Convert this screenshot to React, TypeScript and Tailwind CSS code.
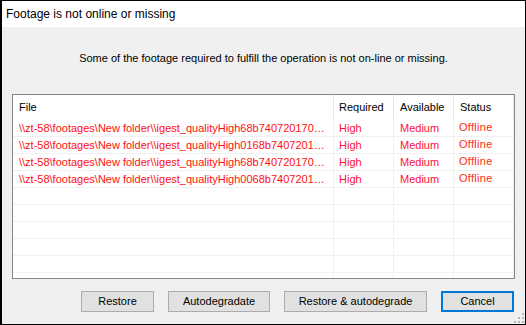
import React from "react";

const rows = [
  "\\\\zt-58\\footages\\New folder\\\\igest_qualityHigh68b740720170…",
  "\\\\zt-58\\footages\\New folder\\\\igest_qualityHigh0168b7407201…",
  "\\\\zt-58\\footages\\New folder\\\\igest_qualityHigh68b740720170…",
  "\\\\zt-58\\footages\\New folder\\\\igest_qualityHigh0068b7407201…",
];

function Row({ path }: { path?: string }) {
  return (
    <div className="grid grid-cols-[321px_60px_60px_60px] h-[17px] shrink-0 border-b border-[#f0f0f0] text-[11px] leading-[16px]">
      <div className="border-r border-[#f0f0f0] pl-[6px] text-[#ff1010] whitespace-nowrap overflow-hidden">{path}</div>
      <div className="border-r border-[#f0f0f0] pl-[5px] text-[#ff0f3c]">{path ? "High" : ""}</div>
      <div className="border-r border-[#f0f0f0] pl-[6px] text-[#ff0f3c]">{path ? "Medium" : ""}</div>
      <div className="border-r border-[#f0f0f0] pl-[5px] text-[#ff2a10] tracking-[0.3px] -mt-[1px]">{path ? "Offline" : ""}</div>
    </div>
  );
}

export default function App() {
  return (
    <div
      className="relative w-[526px] h-[325px] bg-[#f0f0f0] border-l-2 border-t border-r border-b border-black flex flex-col text-black overflow-hidden"
      style={{ fontFamily: '"Liberation Sans", Arial, sans-serif' }}
    >
      <div className="h-[26px] shrink-0 bg-white pl-[4px] flex items-center text-[12px]">
        Footage is not online or missing
      </div>
      <div className="h-[67px] shrink-0 flex justify-center pt-[24px] text-[11px] leading-[14px]">
        Some of the footage required to fulfill the operation is not on-line or missing.
      </div>
      <div className="ml-[10px] w-[503px] h-[185px] shrink-0 border border-[#828790] bg-white flex flex-col overflow-hidden">
        <div className="grid grid-cols-[321px_60px_60px_60px] h-[25px] shrink-0 text-[11px] items-center">
          <div className="h-full border-r border-[#e5e5e5] pl-[6px] flex items-center">File</div>
          <div className="h-full border-r border-[#e5e5e5] pl-[5px] flex items-center">Required</div>
          <div className="h-full border-r border-[#e5e5e5] pl-[6px] flex items-center">Available</div>
          <div className="h-full border-r border-[#e5e5e5] pl-[6px] flex items-center">Status</div>
        </div>
        {rows.map((r, i) => (
          <Row key={i} path={r} />
        ))}
        {[0, 1, 2, 3, 4, 5].map((i) => (
          <Row key={"e" + i} />
        ))}
      </div>
      <div className="mt-[12px] h-[21px] shrink-0 flex justify-end gap-[14px] pr-[11px] text-[11px]">
        <button className="w-[73px] h-[21px] bg-[#e1e1e1] border border-[#adadad]">Restore</button>
        <button className="w-[102px] h-[21px] bg-[#e1e1e1] border border-[#adadad]">Autodegradate</button>
        <button className="w-[143px] h-[21px] bg-[#e1e1e1] border border-[#adadad]">Restore &amp; autodegrade</button>
        <button className="w-[73px] h-[21px] bg-[#e1e1e1] border-2 border-[#0078d7]">Cancel</button>
      </div>
      <svg className="absolute right-[1px] bottom-[1px]" width="10" height="10" viewBox="0 0 10 10">
        <rect x="8" y="0" width="2" height="2" fill="#b8b8b8" />
        <rect x="4" y="4" width="2" height="2" fill="#b8b8b8" />
        <rect x="8" y="4" width="2" height="2" fill="#b8b8b8" />
        <rect x="0" y="8" width="2" height="2" fill="#b8b8b8" />
        <rect x="4" y="8" width="2" height="2" fill="#b8b8b8" />
        <rect x="8" y="8" width="2" height="2" fill="#b8b8b8" />
      </svg>
    </div>
  );
}
